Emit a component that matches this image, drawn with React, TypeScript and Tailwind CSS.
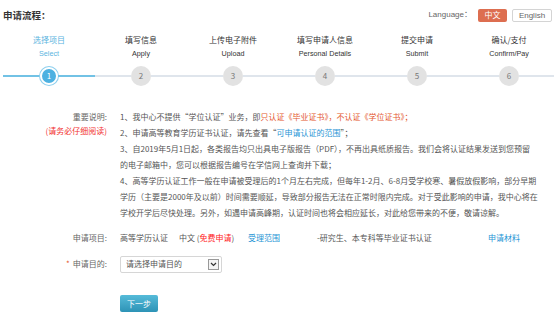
import React from "react";

const steps = [
  { cn: "选择项目", en: "Select" },
  { cn: "填写信息", en: "Apply" },
  { cn: "上传电子附件", en: "Upload" },
  { cn: "填写申请人信息", en: "Personal Details" },
  { cn: "提交申请", en: "Submit" },
  { cn: "确认/支付", en: "Confirm/Pay" },
];

const App = () => {
  return (
    <div className="w-[554px] h-[313px] overflow-hidden bg-white text-[#555] font-['Noto_Sans_CJK_SC','Liberation_Sans',sans-serif]">
      {/* header */}
      <div className="flex h-[30px] items-center justify-between pl-[3px] pr-[2px]">
        <h1 className="text-[9.5px] font-bold text-[#333]">申请流程：</h1>
        <div className="flex items-center text-[8px] font-['Liberation_Sans','Noto_Sans_CJK_SC',sans-serif]">
          <span className="mr-[6px] text-[#666]">Language：</span>
          <button className="h-[13px] w-[29px] rounded-[2px] bg-[#dd6e50] text-[8px] leading-[13px] text-white">
            中文
          </button>
          <button className="ml-[5px] h-[13px] w-[40px] rounded-[2px] border border-[#d4d4d4] bg-white text-[8px] leading-[11px] text-[#666]">
            English
          </button>
        </div>
      </div>

      {/* steps */}
      <div className="grid grid-cols-[repeat(6,92px)] pl-[3px]">
        {steps.map((s, i) => {
          const active = i === 0;
          return (
            <div key={s.en} className="flex flex-col items-center">
              <div
                className={`mt-[3px] text-[8px] leading-[14px] ${
                  active ? "text-[#5ab4e0]" : "text-[#333]"
                }`}
              >
                {s.cn}
              </div>
              <div
                className={`font-['Liberation_Sans',sans-serif] text-[7.2px] leading-[14px] ${
                  active ? "text-[#5ab4e0]" : "text-[#333]"
                }`}
              >
                {s.en}
              </div>
              <div className="mt-[5px] flex h-[20px] w-full items-center">
                <div className={`h-[2px] flex-1 ${active ? "bg-[#72c2e5]" : "bg-[#dfe5ec]"}`} />
                {active ? (
                  <div className="flex h-[18px] w-[18px] items-center justify-center rounded-full border-2 border-white bg-[#4db1e1] text-[8px] text-white shadow-[0_0_0_1px_#8ccfee]">
                    1
                  </div>
                ) : (
                  <div className="flex h-[20px] w-[20px] items-center justify-center rounded-full bg-[#e2e2e2] text-[8px] text-[#777]">
                    {i + 1}
                  </div>
                )}
                <div className={`h-[2px] flex-1 ${active ? "bg-[#72c2e5]" : "bg-[#dfe5ec]"}`} />
              </div>
            </div>
          );
        })}
      </div>

      {/* notes */}
      <div className="mt-[22.5px] flex text-[8px]">
        <div className="w-[107px] shrink-0 text-right leading-[14.5px]">
          <div className="mt-[1px] text-[#666]">重要说明:</div>
          <div className="text-[#f23030]">(请务必仔细阅读)</div>
        </div>
        <div className="ml-[13px] whitespace-nowrap leading-[16.1px]">
          <div>
            1、我中心不提供“学位认证”业务，即
            <span className="text-[#e4572e]">只认证《毕业证书》，不认证《学位证书》；</span>
          </div>
          <div>
            2、申请高等教育学历证书认证，请先查看“
            <span className="text-[#1f95d5]">可申请认证的范围</span>”；
          </div>
          <div>
            3、自2019年5月1日起，各类报告均只出具电子版报告（PDF），不再出具纸质报告。我们会将认证结果发送到您预留
          </div>
          <div>的电子邮箱中，您可以根据报告编号在学信网上查询并下载；</div>
          <div>
            4、高等学历认证工作一般在申请被受理后的1个月左右完成，但每年1-2月、6-8月受学校寒、暑假放假影响，部分早期
          </div>
          <div>
            学历（主要是2000年及以前）时间需要顺延，导致部分报告无法在正常时限内完成。对于受此影响的申请，我中心将在
          </div>
          <div>学校开学后尽快处理。另外，如遇申请高峰期，认证时间也将会相应延长，对此给您带来的不便，敬请谅解。</div>
        </div>
      </div>

      {/* form */}
      <div className="mt-[9px] flex items-center text-[8px] leading-[16px]">
        <div className="w-[107px] shrink-0 text-right text-[#666]">申请项目:</div>
        <div className="ml-[13px] flex whitespace-nowrap">
          <span className="w-[59px]">高等学历认证</span>
          <span className="w-[69px]">
            中文 (<span className="text-[#f22]">免费申请</span>)
          </span>
          <a className="w-[69px] text-[#1f95d5]">受理范围</a>
          <span className="w-[171px]">-研究生、本专科等毕业证书认证</span>
          <a className="text-[#1f95d5]">申请材料</a>
        </div>
      </div>

      <div className="mt-[9.5px] flex items-center text-[8px]">
        <div className="w-[107px] shrink-0 text-right text-[#666]">
          <span className="mr-[3px] text-[#e4572e]">*</span>申请目的:
        </div>
        <div className="relative ml-[13px] h-[17px] w-[102px]">
          <select className="h-full w-full appearance-none rounded-[2px] border border-[#d6d6d6] bg-white pl-[5px] text-[8px] text-[#555] outline-none">
            <option>请选择申请目的</option>
          </select>
          <div className="pointer-events-none absolute right-[3px] top-[3px] flex h-[11px] w-[11px] items-center justify-center border border-[#999] bg-[#f4f4f4]">
            <svg width="7" height="5" viewBox="0 0 7 5">
              <path d="M1 1l2.5 2.5L6 1" fill="none" stroke="#333" strokeWidth="1.2" />
            </svg>
          </div>
        </div>
      </div>

      <div className="ml-[120px] mt-[15px]">
        <button className="h-[17px] w-[38px] rounded-[2px] bg-gradient-to-b from-[#55bbd9] to-[#2d93b6] text-[8px] text-white">
          下一步
        </button>
      </div>
    </div>
  );
};

export default App;
